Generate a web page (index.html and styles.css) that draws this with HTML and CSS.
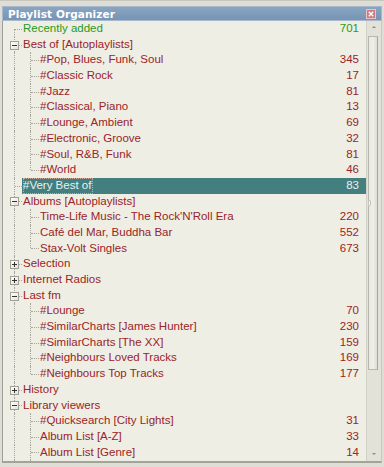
FILE: index.html
```html
<!DOCTYPE html>
<html>
<head>
<meta charset="utf-8">
<link rel="stylesheet" href="styles.css">
</head>
<body>
<div class="window">
  <div class="titlebar">
    <span class="title">Playlist Organizer</span>
    <span class="close"><svg width="9" height="9" viewBox="0 0 9 9"><path d="M2 2 L7 7 M7 2 L2 7" stroke="#fff" stroke-width="1.6"/></svg></span>
  </div>
  <div class="body">
    <ul class="tree">
      <li class="row root first"><span class="g1"></span><span class="label green">Recently added</span><span class="count green">701</span></li>
      <li class="row root open"><span class="g1"><i class="box minus"></i></span><span class="label">Best of [Autoplaylists]</span><span class="count"></span></li>
      <li class="row child"><span class="g1"></span><span class="g2"></span><span class="label">#Pop, Blues, Funk, Soul</span><span class="count">345</span></li>
      <li class="row child"><span class="g1"></span><span class="g2"></span><span class="label">#Classic Rock</span><span class="count">17</span></li>
      <li class="row child"><span class="g1"></span><span class="g2"></span><span class="label">#Jazz</span><span class="count">81</span></li>
      <li class="row child"><span class="g1"></span><span class="g2"></span><span class="label">#Classical, Piano</span><span class="count">13</span></li>
      <li class="row child"><span class="g1"></span><span class="g2"></span><span class="label">#Lounge, Ambient</span><span class="count">69</span></li>
      <li class="row child"><span class="g1"></span><span class="g2"></span><span class="label">#Electronic, Groove</span><span class="count">32</span></li>
      <li class="row child"><span class="g1"></span><span class="g2"></span><span class="label">#Soul, R&amp;B, Funk</span><span class="count">81</span></li>
      <li class="row child last"><span class="g1"></span><span class="g2"></span><span class="label">#World</span><span class="count">46</span></li>
      <li class="row root selected"><span class="g1"></span><span class="label"><span class="focus">#Very Best of</span></span><span class="count">83</span></li>
      <li class="row root open"><span class="g1"><i class="box minus"></i></span><span class="label">Albums [Autoplaylists]</span><span class="count"></span></li>
      <li class="row child"><span class="g1"></span><span class="g2"></span><span class="label">Time-Life Music - The Rock'N'Roll Era</span><span class="count">220</span></li>
      <li class="row child"><span class="g1"></span><span class="g2"></span><span class="label">Café del Mar, Buddha Bar</span><span class="count">552</span></li>
      <li class="row child last"><span class="g1"></span><span class="g2"></span><span class="label">Stax-Volt Singles</span><span class="count">673</span></li>
      <li class="row root"><span class="g1"><i class="box plus"></i></span><span class="label">Selection</span><span class="count"></span></li>
      <li class="row root"><span class="g1"><i class="box plus"></i></span><span class="label">Internet Radios</span><span class="count"></span></li>
      <li class="row root open"><span class="g1"><i class="box minus"></i></span><span class="label">Last fm</span><span class="count"></span></li>
      <li class="row child"><span class="g1"></span><span class="g2"></span><span class="label">#Lounge</span><span class="count">70</span></li>
      <li class="row child"><span class="g1"></span><span class="g2"></span><span class="label">#SimilarCharts [James Hunter]</span><span class="count">230</span></li>
      <li class="row child"><span class="g1"></span><span class="g2"></span><span class="label">#SimilarCharts [The XX]</span><span class="count">159</span></li>
      <li class="row child"><span class="g1"></span><span class="g2"></span><span class="label">#Neighbours Loved Tracks</span><span class="count">169</span></li>
      <li class="row child last"><span class="g1"></span><span class="g2"></span><span class="label">#Neighbours Top Tracks</span><span class="count">177</span></li>
      <li class="row root"><span class="g1"><i class="box plus"></i></span><span class="label">History</span><span class="count"></span></li>
      <li class="row root open"><span class="g1"><i class="box minus"></i></span><span class="label">Library viewers</span><span class="count"></span></li>
      <li class="row child"><span class="g1"></span><span class="g2"></span><span class="label">#Quicksearch [City Lights]</span><span class="count">31</span></li>
      <li class="row child"><span class="g1"></span><span class="g2"></span><span class="label">Album List [A-Z]</span><span class="count">33</span></li>
      <li class="row child"><span class="g1"></span><span class="g2"></span><span class="label">Album List [Genre]</span><span class="count">14</span></li>
      <li class="row child"><span class="g1"></span><span class="g2"></span><span class="label"></span><span class="count"></span></li>
    </ul>
    <div class="scrollbar">
      <div class="arrow up"></div>
      <div class="track"><div class="thumb"><i class="grip"></i></div></div>
      <div class="arrow down"></div>
    </div>
  </div>
</div>
</body>
</html>
```
FILE: styles.css
```css
* { box-sizing: border-box; }
html, body { margin: 0; padding: 0; }
body {
  width: 384px;
  height: 467px;
  overflow: hidden;
  background: #dedcd3;
  font-family: "Liberation Sans", Arial, sans-serif;
  font-size: 11.5px;
}
.window {
  width: 384px;
  height: 467px;
  display: flex;
  flex-direction: column;
  padding: 5px 2px 4px 2px;
  background: #dfded6;
  border-top: 1px solid #c8c7be;
}
.titlebar {
  height: 15px;
  flex: none;
  display: flex;
  align-items: center;
  justify-content: space-between;
  padding: 0 5px 0 5px;
  background: linear-gradient(#8aa5c2, #7694b5);
  border: 1px solid #a9b9cb;
}
.title {
  color: #fff;
  font-weight: bold;
  font-family: "DejaVu Sans", sans-serif;
  font-size: 10.5px;
  letter-spacing: 0.1px;
}
.close {
  width: 10px;
  height: 10px;
  background: #cb7d80;
  border: 1px solid #e9c4c4;
  display: flex;
  align-items: center;
  justify-content: center;
}
.close svg { display: block; width: 8px; height: 8px; }
.body {
  flex: 1;
  display: flex;
  background: #efeee5;
  border-left: 1px solid #9f9e96;
  border-bottom: 2px solid #a4a39a;
  border-right: 1px solid #c9c8bf;
  min-height: 0;
}
.tree {
  list-style: none;
  margin: 0;
  padding: 0;
  flex: 1;
  overflow: hidden;
}
.row {
  height: 15.7px;
  display: flex;
  align-items: stretch;
  color: #9a2426;
  line-height: 15.7px;
  white-space: nowrap;
}
.g1, .g2 {
  position: relative;
  flex: none;
}
.g1 { width: 19px; }
.g2 { width: 17px; }
/* vertical dotted lines */
.g1::before, .g2::before {
  content: "";
  position: absolute;
  left: 11px;
  top: 0;
  bottom: 0;
  border-left: 1px dotted #a6a59c;
}
.g2::before { left: 8px; }
.child.last .g2::before { bottom: 50%; }
.first .g1::before { top: 50%; }
/* horizontal connectors */
.root .g1::after, .g2::after {
  content: "";
  position: absolute;
  top: 50%;
  border-top: 1px dotted #a6a59c;
}
.root .g1::after { left: 12px; width: 7px; }
.g2::after { left: 9px; width: 8px; }
.box {
  position: absolute;
  left: 7px;
  top: 50%;
  margin-top: -4px;
  width: 9px;
  height: 9px;
  border: 1px solid #a19f96;
  background: linear-gradient(135deg, #fff, #e4e2da);
  z-index: 1;
}
.box::before {
  content: "";
  position: absolute;
  left: 1px;
  top: 3px;
  width: 5px;
  height: 1px;
  background: #333;
}
.box.plus::after {
  content: "";
  position: absolute;
  left: 3px;
  top: 1px;
  width: 1px;
  height: 5px;
  background: #333;
}
.label {
  flex: 1;
  padding-left: 1px;
  overflow: hidden;
}
.count {
  flex: none;
  padding-right: 7px;
  text-align: right;
}
.green { color: #269b26; }
.selected .label, .selected .count {
  background: #437f7f;
  color: #e9f1f1;
}
.focus {
  display: inline-block;
  height: 15.7px;
  line-height: 15px;
  outline: 1px dotted #c9a99a;
  outline-offset: -1px;
  padding-right: 2px;
}
.scrollbar {
  width: 15px;
  flex: none;
  display: flex;
  flex-direction: column;
  background: #e3e2d9;
  border-left: 1px solid #d2d1c8;
}
.arrow {
  height: 14px;
  flex: none;
  position: relative;
}
.arrow::before {
  content: "";
  position: absolute;
  left: 5px;
  width: 0;
  height: 0;
  border-left: 2px solid transparent;
  border-right: 2px solid transparent;
}
.arrow.up::before { top: 5px; border-bottom: 2px solid #8c8b84; }
.arrow.down::before { top: 6px; border-top: 2px solid #8c8b84; }
.track {
  flex: 1;
  padding: 1px 3px 0 1px;
}
.thumb {
  height: 334px;
  border: 1px solid #b9b8ae;
  border-right-color: #a8a79e;
  background: linear-gradient(90deg, #e9e8df, #f1f0e8 50%, #dddcd2);
  position: relative;
}
.grip {
  position: absolute;
  left: -1px;
  top: 50%;
  margin-top: -3px;
  width: 3px;
  height: 6px;
  background: #f8f8f4;
  border: 1px solid #c8c7bd;
  border-radius: 1px;
}
```
